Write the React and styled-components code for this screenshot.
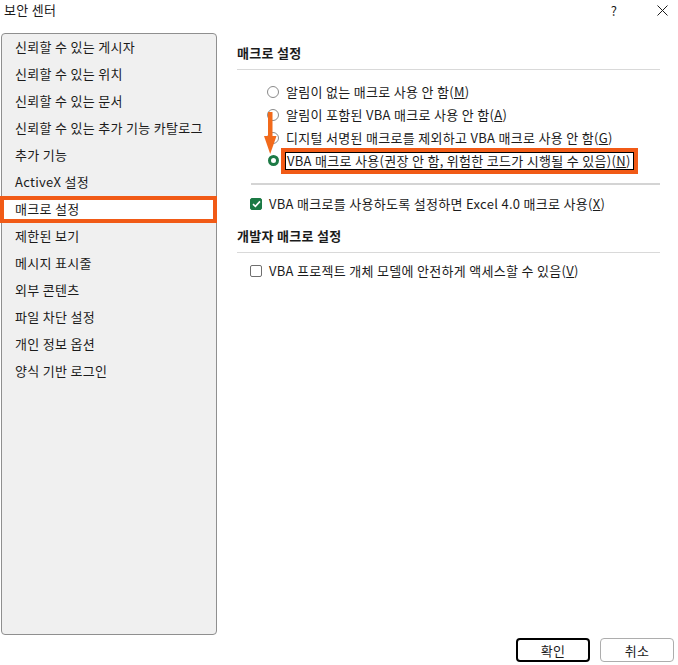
import React from 'react';
import styled, { createGlobalStyle } from 'styled-components';

const GlobalStyle = createGlobalStyle`
  html, body {
    margin: 0;
    padding: 0;
    background: #ffffff;
  }
  body {
    font-family: "Noto Sans CJK KR", "Noto Sans", sans-serif;
    color: #1b1b1b;
  }
`;

const ORANGE = '#f15a16';
const GREEN = '#1c7a45';

const Window = styled.div`
  width: 678px;
  height: 665px;
  display: flex;
  flex-direction: column;
  background: #fff;
  font-size: 13px;
  letter-spacing: 0.3px;
  overflow: hidden;
`;

const TitleBar = styled.div`
  height: 33px;
  display: flex;
  align-items: flex-start;
  padding: 1px 0 0 4px;
  box-sizing: border-box;
`;

const Title = styled.div`
  flex: 1;
  font-size: 13px;
  line-height: 18px;
`;

const TitleButton = styled.div`
  width: 24px;
  height: 18px;
  display: flex;
  align-items: center;
  justify-content: center;
  font-size: 13px;
  margin-right: ${(p) => p.$mr || 0}px;
`;

const Body = styled.div`
  flex: 1;
  display: flex;
  min-height: 0;
`;

const Sidebar = styled.ul`
  list-style: none;
  margin: 0 0 0 1px;
  padding: 0;
  width: 216px;
  height: 602px;
  box-sizing: border-box;
  background: #f0f0f0;
  border: 1px solid #8f8f8f;
  border-radius: 4px;
`;

const NavItem = styled.li`
  height: 27px;
  line-height: 26px;
  padding-left: 13px;
  box-sizing: border-box;
  white-space: nowrap;
  ${(p) =>
    p.$active &&
    `
    margin: 0 -1px 0 -2px;
    padding-left: 11px;
    line-height: 18px;
    background: #fff;
    border: 4px solid ${ORANGE};
  `}
`;

const Content = styled.div`
  flex: 1;
  padding: 10px 18px 0 20px;
`;

const Heading = styled.div`
  font-weight: bold;
  line-height: 20px;
  padding-bottom: 6px;
  border-bottom: 1px solid #d9d9d9;
  margin-top: ${(p) => p.$mt || 0}px;
`;

const RadioGroup = styled.div`
  position: relative;
  margin-top: 10px;
  padding-left: 30px;
`;

const Row = styled.label`
  display: flex;
  align-items: center;
  height: 23px;
  gap: ${(p) => p.$gap || 7}px;
  white-space: nowrap;
`;

const RadioCircle = styled.span`
  width: 12px;
  height: 12px;
  box-sizing: border-box;
  border-radius: 50%;
  border: 1px solid #8a8a8a;
  background: #fff;
  flex: none;
`;

const RadioChecked = styled.span`
  width: 11px;
  height: 11px;
  margin: 0 1px 0 1px;
  box-sizing: border-box;
  border-radius: 50%;
  border: 3px solid ${GREEN};
  background: #fff;
  flex: none;
`;

const Highlight = styled.span`
  display: inline-block;
  line-height: 16px;
  padding: 0 2px 0 1px;
  margin-left: -2px;
  border: 1px solid #000;
  box-shadow: 0 0 0 4px ${ORANGE};
`;

const Arrow = styled.svg`
  position: absolute;
  left: 27px;
  top: 32px;
  overflow: visible;
`;

const Separator = styled.div`
  margin: 11px 0 7px 14px;
  border-top: 2px solid #d4d4d4;
`;

const CheckRow = styled(Row)`
  padding-left: 13px;
  margin-top: ${(p) => p.$mt || 0}px;
`;

const Box = styled.span`
  width: 12px;
  height: 12px;
  box-sizing: border-box;
  border-radius: 2px;
  flex: none;
  display: flex;
  align-items: center;
  justify-content: center;
  background: ${(p) => (p.$checked ? GREEN : '#fff')};
  border: 1px solid ${(p) => (p.$checked ? GREEN : '#6f6f6f')};
`;

const Footer = styled.div`
  height: 30px;
  display: flex;
  justify-content: flex-end;
  align-items: flex-start;
  gap: 10px;
  padding: 3px 4px 0 0;
  box-sizing: border-box;
`;

const Button = styled.button`
  width: 74px;
  height: 24px;
  box-sizing: border-box;
  font-family: inherit;
  font-size: 13px;
  letter-spacing: 0.3px;
  color: #1b1b1b;
  background: #fff;
  border-radius: 4px;
  border: ${(p) => (p.$primary ? '2px solid #000' : '1px solid #adadad')};
  padding: 0;
`;

const navItems = [
  '신뢰할 수 있는 게시자',
  '신뢰할 수 있는 위치',
  '신뢰할 수 있는 문서',
  '신뢰할 수 있는 추가 기능 카탈로그',
  '추가 기능',
  'ActiveX 설정',
  '매크로 설정',
  '제한된 보기',
  '메시지 표시줄',
  '외부 콘텐츠',
  '파일 차단 설정',
  '개인 정보 옵션',
  '양식 기반 로그인',
];

function Check() {
  return (
    <svg width="9" height="8" viewBox="0 0 9 8">
      <path d="M1 4.2 L3.4 6.4 L8 1.4" fill="none" stroke="#fff" strokeWidth="1.6" />
    </svg>
  );
}

export default function App() {
  return (
    <>
      <GlobalStyle />
      <Window>
        <TitleBar>
          <Title>보안 센터</Title>
          <TitleButton $mr={24}>?</TitleButton>
          <TitleButton $mr={4}>
            <svg width="11" height="11" viewBox="0 0 11 11">
              <path d="M0.5 0.5 L10.5 10.5 M10.5 0.5 L0.5 10.5" stroke="#1b1b1b" strokeWidth="1" />
            </svg>
          </TitleButton>
        </TitleBar>
        <Body>
          <Sidebar>
            {navItems.map((t) => (
              <NavItem key={t} $active={t === '매크로 설정'}>
                {t}
              </NavItem>
            ))}
          </Sidebar>
          <Content>
            <Heading>매크로 설정</Heading>
            <RadioGroup>
              <Row>
                <RadioCircle />
                <span>알림이 없는 매크로 사용 안 함(<u>M</u>)</span>
              </Row>
              <Row>
                <RadioCircle />
                <span>알림이 포함된 VBA 매크로 사용 안 함(<u>A</u>)</span>
              </Row>
              <Row>
                <RadioCircle />
                <span>디지털 서명된 매크로를 제외하고 VBA 매크로 사용 안 함(<u>G</u>)</span>
              </Row>
              <Row>
                <RadioChecked />
                <Highlight>VBA 매크로 사용(권장 안 함, 위험한 코드가 시행될 수 있음)(<u>N</u>)</Highlight>
              </Row>
              <Arrow width="12" height="44" viewBox="0 0 12 44">
                <rect x="4" y="0" width="4.5" height="28" fill="#f26a1b" />
                <path d="M0 24 L12.5 24 L6.2 42 Z" fill="#f26a1b" />
              </Arrow>
            </RadioGroup>
            <Separator />
            <CheckRow>
              <Box $checked>
                <Check />
              </Box>
              <span>VBA 매크로를 사용하도록 설정하면 Excel 4.0 매크로 사용(<u>X</u>)</span>
            </CheckRow>
            <Heading $mt={11}>개발자 매크로 설정</Heading>
            <CheckRow $mt={6}>
              <Box />
              <span>VBA 프로젝트 개체 모델에 안전하게 액세스할 수 있음(<u>V</u>)</span>
            </CheckRow>
          </Content>
        </Body>
        <Footer>
          <Button $primary>확인</Button>
          <Button>취소</Button>
        </Footer>
      </Window>
    </>
  );
}
